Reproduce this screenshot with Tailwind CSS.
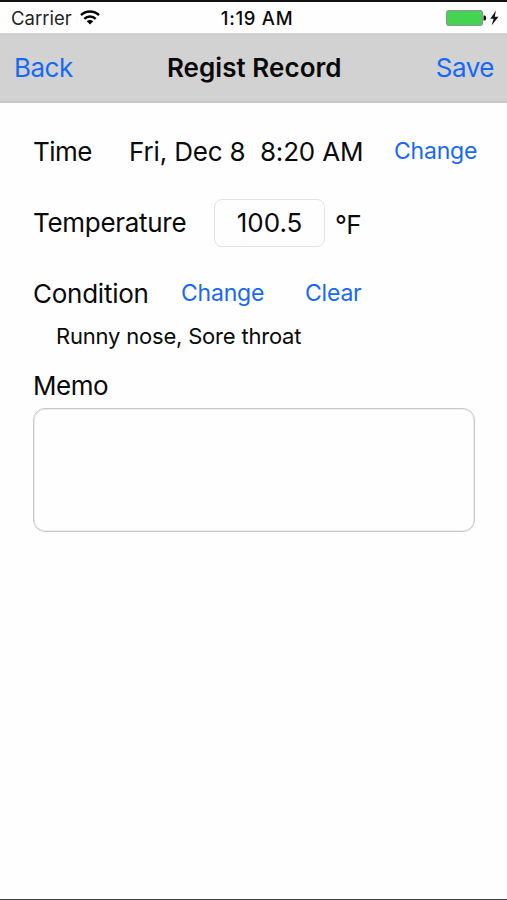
<!DOCTYPE html>
<html lang="en">
<head>
<meta charset="utf-8">
<title>Regist Record</title>
<script src="https://cdn.jsdelivr.net/npm/@tailwindcss/browser@4"></script>
</head>
<body class="bg-white">
<div class="flex h-[900px] w-[507px] flex-col overflow-hidden whitespace-nowrap border-t-2 border-b border-t-[#111111] border-b-[#444444] bg-[#fefefe] font-['Inter','Liberation_Sans',sans-serif] text-[26px] leading-8 text-[#0a0a0a]">
  <div class="grid h-[31px] shrink-0 grid-cols-3 items-center pl-[11px] pr-[8px] text-[18.5px]">
    <div class="flex items-center gap-[8px]">
      <span class="text-[#222222]">Carrier</span>
      <svg class="mb-[2px] h-[15px] w-[20px]" viewBox="0 0 20 15" fill="none" stroke="#000" stroke-width="2.5"><path d="M1 5.2C6 .3 14 .3 19 5.2M4.3 8.8C7.6 5.6 12.4 5.6 15.7 8.8"/><path d="M10 14.6 6.7 11.3C8.6 9.5 11.4 9.5 13.3 11.3Z" fill="#000" stroke="none"/></svg>
    </div>
    <span class="pl-[4px] text-center font-medium tracking-[0.7px]">1:19 AM</span>
    <div class="flex items-center justify-end">
      <svg class="h-[18px] w-[54px]" viewBox="0 0 54 18"><rect x="1.6" y="1.6" width="35.8" height="14.8" rx="2.3" fill="#43d551" stroke="#8b9b8d" stroke-width="1.3"/><path d="M38.5 6.5h1c2.2 0 2.2 5 0 5h-1z" fill="#111"/><path d="M51 1.5 45.3 9.7h3.3L46.6 16.5 53.5 7.8H49.7Z" fill="#111"/></svg>
    </div>
  </div>
  <div class="flex h-[70px] shrink-0 items-center justify-between border-b-2 border-[#c8c8c8] bg-[#d2d2d2] px-[13px] pt-[2px]">
    <span class="pl-px tracking-[-0.5px] text-[#1769f5]">Back</span>
    <span class="font-semibold tracking-[0.05px]">Regist Record</span>
    <span class="tracking-[-0.5px] text-[#1769f5]">Save</span>
  </div>
  <div class="mt-[33px] flex h-8 shrink-0 pl-[33px]">
    <span class="w-[96px] tracking-[-0.5px]">Time</span>
    <span class="w-[265px] whitespace-pre tracking-[-0.15px]">Fri, Dec 8  8:20 AM</span>
    <span class="-mt-px text-[23px] tracking-[-0.2px] text-[#1769f5]">Change</span>
  </div>
  <div class="mt-[31px] flex h-[48px] shrink-0 items-center pl-[33px]">
    <span class="w-[181px] tracking-[-0.3px]">Temperature</span>
    <div class="flex h-[48px] w-[111px] items-center justify-center rounded-[8px] border border-[#e3e3e3]">100.5</div>
    <span class="ml-[10px] mt-[3px] tracking-[-0.7px]">°F</span>
  </div>
  <div class="mt-[31px] flex h-8 shrink-0 pl-[33px]">
    <span class="w-[148px] tracking-[-0.25px]">Condition</span>
    <span class="-mt-px w-[124px] text-[23px] tracking-[-0.2px] text-[#1769f5]">Change</span>
    <span class="-mt-px text-[23px] tracking-[-0.2px] text-[#1769f5]">Clear</span>
  </div>
  <div class="mt-[10px] h-8 shrink-0 pl-[56px] text-[22px] tracking-[-0.2px]">Runny nose, Sore throat</div>
  <div class="mt-[18px] h-8 shrink-0 pl-[33px] tracking-[-0.5px]">Memo</div>
  <div class="ml-[33px] mt-[6px] h-[124px] w-[442px] shrink-0 rounded-[12px] border border-[#c8c8c8] shadow-[inset_0_0_0_1px_#ededed]"></div>
</div>
</body>
</html>
